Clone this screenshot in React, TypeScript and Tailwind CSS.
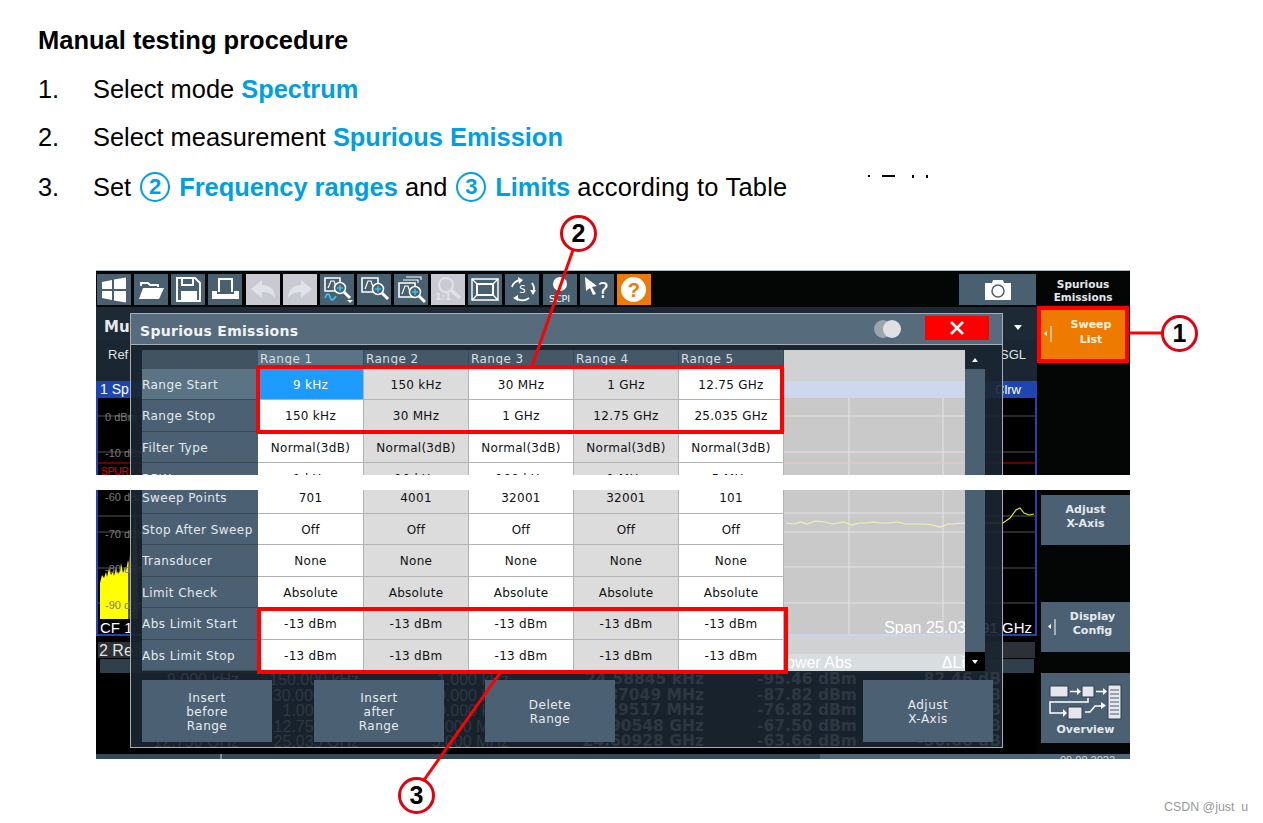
import React from 'react';

const ranges = ['Range 1', 'Range 2', 'Range 3', 'Range 4', 'Range 5'];

const upperRows = [
    { label: 'Range Start', values: ['9 kHz', '150 kHz', '30 MHz', '1 GHz', '12.75 GHz'] },
    { label: 'Range Stop', values: ['150 kHz', '30 MHz', '1 GHz', '12.75 GHz', '25.035 GHz'] },
    { label: 'Filter Type', values: ['Normal(3dB)', 'Normal(3dB)', 'Normal(3dB)', 'Normal(3dB)', 'Normal(3dB)'] },
    { label: 'RBW', values: ['1 kHz', '10 kHz', '100 kHz', '1 MHz', '5 MHz'] },
];

const lowerRows = [
    { label: 'Sweep Points', values: ['701', '4001', '32001', '32001', '101'] },
    { label: 'Stop After Sweep', values: ['Off', 'Off', 'Off', 'Off', 'Off'] },
    { label: 'Transducer', values: ['None', 'None', 'None', 'None', 'None'] },
    { label: 'Limit Check', values: ['Absolute', 'Absolute', 'Absolute', 'Absolute', 'Absolute'] },
    { label: 'Abs Limit Start', values: ['-13 dBm', '-13 dBm', '-13 dBm', '-13 dBm', '-13 dBm'] },
    { label: 'Abs Limit Stop', values: ['-13 dBm', '-13 dBm', '-13 dBm', '-13 dBm', '-13 dBm'] },
];

const results = [
    ['9.000 kHz', '150.000 kHz', '1.000 kHz', '24.58845 kHz', '-95.46 dBm', '82.46 dB'],
    ['150.000 kHz', '30.000 MHz', '10.000 kHz', '27.87049 MHz', '-87.82 dBm', '74.82 dB'],
    ['30.000 MHz', '1.000 GHz', '100.000 kHz', '816.69517 MHz', '-76.82 dBm', '63.82 dB'],
    ['1.000 GHz', '12.750 GHz', '1.000 MHz', '12.90548 GHz', '-67.50 dBm', '-54.50 dB'],
    ['12.750 GHz', '25.035 GHz', '5.000 MHz', '24.60928 GHz', '-63.66 dBm', '-50.66 dB'],
];

const Blue = ({ children }: { children: React.ReactNode }) => (
    <span className="font-bold text-[#009fe3]">{children}</span>
);

const CircledBlue = ({ n }: { n: string }) => (
    <span className="inline-flex w-[30px] h-[30px] items-center justify-center rounded-full border-[2.5px] border-[#009fe3] text-[#009fe3] font-bold text-[22px] mx-[9px]">
        {n}
    </span>
);

const Callout = ({ n, className }: { n: string; className: string }) => (
    <div className={`absolute w-[37px] h-[37px] rounded-full border-[3px] border-[#e3000f] bg-white flex items-center justify-center text-black font-bold text-[25px] font-['Liberation_Sans',sans-serif] ${className}`}>
        {n}
    </div>
);

const ToolButton = ({ children, tone = 'normal' }: { children?: React.ReactNode; tone?: 'normal' | 'off' | 'help' }) => (
    <div className={`w-[34px] h-[31px] shrink-0 ${tone === 'off' ? 'bg-[#c9cad1]' : tone === 'help' ? 'bg-[#ef7a00]' : 'bg-[#48606f]'}`}>
        <svg viewBox="0 0 34 31" className="w-full h-full" fill="none" stroke="#fff" strokeWidth="1.6">
            {children}
        </svg>
    </div>
);

const Magnifier = ({ x, y, plus = true }: { x: number; y: number; plus?: boolean }) => (
    <g>
        <circle cx={x} cy={y} r="5.5" fill="#48606f" stroke="#fff" strokeWidth="1.5" />
        <path d={`M${x + 4} ${y + 4}l6 6`} stroke="#fff" strokeWidth="3" />
        {plus && <path d={`M${x - 3} ${y}h6M${x} ${y - 3}v6`} stroke="#36c3f0" strokeWidth="1.5" />}
    </g>
);

const Toolbar = () => (
    <div className="h-[36px] pt-[3px] pl-[1px] pr-[1px] flex gap-[3.140px] bg-[#040606]">
        <ToolButton>
            <path d="M5 8l10-2v9H5zM17 5.600l12-2V15H17zM5 17h10v9L5 24zM17 17h12v11.400l-12-2z" fill="#fff" stroke="none" />
        </ToolButton>
        <ToolButton>
            <path d="M7 12V9h7l2 2h8v2" strokeWidth="1.8" />
            <path d="M5 25l4-11h21l-5 11z" fill="#fff" stroke="none" />
        </ToolButton>
        <ToolButton>
            <path d="M6 4h18l5 5v18H6z" strokeWidth="2" />
            <path d="M11 4v7h11V4" strokeWidth="2" />
            <path d="M10 17h16v10H10z" fill="#fff" stroke="none" />
        </ToolButton>
        <ToolButton>
            <path d="M11 18V5h13v13" strokeWidth="2" />
            <path d="M4 17h5v3h17v-3h5v8H4z" fill="#fff" stroke="none" />
        </ToolButton>
        <ToolButton tone="off">
            <path d="M5 15l11-9v5c8 0 13 5 13 13-3-4-7-6-13-6v6z" fill="#dfe3e8" stroke="none" />
        </ToolButton>
        <ToolButton tone="off">
            <path d="M29 15l-11-9v5C10 11 5 16 5 24c3-4 7-6 13-6v6z" fill="#dfe3e8" stroke="none" />
        </ToolButton>
        <ToolButton>
            <path d="M5 4h15v13H5z" />
            <path d="M8 14l3-7h3l2 6" strokeWidth="1.2" />
            <Magnifier x={20} y={14} />
            <path d="M5 24c2-5 4-5 5-1s3 4 6-1" stroke="#36c3f0" strokeWidth="1.6" />
            <path d="M27 26h6l-3 3z" fill="#fff" stroke="none" />
        </ToolButton>
        <ToolButton>
            <path d="M5 4h16v14H5z" />
            <path d="M8 15l3-8h3l2 6" strokeWidth="1.2" />
            <Magnifier x={21} y={15} />
        </ToolButton>
        <ToolButton>
            <path d="M12 3h15v3M9 6h15v3" strokeWidth="1.1" />
            <path d="M5 9h16v14H5z" />
            <path d="M8 20l3-8h3l2 6" strokeWidth="1.2" />
            <Magnifier x={21} y={18} />
        </ToolButton>
        <div className="relative w-[34px] h-[31px] shrink-0 bg-[#c9cad1] overflow-hidden">
            <svg viewBox="0 0 34 31" className="absolute inset-0 w-full h-full" fill="none" stroke="#dfe3e8">
                <circle cx="15" cy="11" r="7" strokeWidth="2" />
                <path d="M20 16l9 8" strokeWidth="3.500" />
            </svg>
            <span className="absolute left-[4px] bottom-[1px] text-[9px] font-bold text-[#e1e4e8] font-['DejaVu_Sans',sans-serif]">1:1</span>
        </div>
        <ToolButton>
            <path d="M4 5h26v21H4z" strokeWidth="1.4" />
            <path d="M9 10h16v11H9z" strokeWidth="2" />
            <path d="M4 5l5 5M30 5l-5 5M4 26l5-5M30 26l-5-5" strokeWidth="1.4" />
        </ToolButton>
        <div className="relative w-[34px] h-[31px] shrink-0 bg-[#48606f]">
            <svg viewBox="0 0 34 31" className="absolute inset-0 w-full h-full" fill="none" stroke="#fff" strokeWidth="1.8">
                <path d="M7 13c1-4 5-7 9-7M27 9c2 3 3 6 1 9M24 24c-4 3-9 3-13 0" />
                <path d="M13 3l5 3-4 4zM25 16l6 0-3 5zM13 21l0 6-5-3z" fill="#fff" stroke="none" />
            </svg>
            <span className="absolute inset-0 flex items-center justify-center text-[10px] text-white font-['DejaVu_Sans',sans-serif]">S</span>
        </div>
        <div className="relative w-[34px] h-[31px] shrink-0 bg-[#48606f]">
            <div className="absolute left-[10px] top-[3px] w-[14px] h-[14px] rounded-full bg-white" />
            <span className="absolute left-0 right-0 bottom-[2px] text-center text-[9.5px] leading-none text-white font-['DejaVu_Sans',sans-serif]">SCPI</span>
        </div>
        <div className="relative w-[34px] h-[31px] shrink-0 bg-[#48606f]">
            <svg viewBox="0 0 34 31" className="absolute inset-0 w-full h-full">
                <path d="M5 3l12 9-5 1 4 7-3 1-3-7-4 3z" fill="#fff" />
            </svg>
            <span className="absolute left-[18px] top-[7px] text-[21px] leading-none text-white font-['DejaVu_Sans',sans-serif]">?</span>
        </div>
        <div className="w-[34px] h-[31px] shrink-0 bg-[#ef7a00] flex items-center justify-center">
            <div className="w-[25px] h-[25px] rounded-full bg-white flex items-center justify-center text-[#ef7a00] font-bold text-[20px] font-['Liberation_Sans',sans-serif]">?</div>
        </div>
        <div className="ml-auto w-[77px] h-[31px] bg-[#48606f] flex items-center justify-center">
            <svg viewBox="0 0 28 22" className="w-[28px] h-[22px]">
                <path d="M1 4h7l1-3h10l1 3h7v17H1z" fill="#fff" />
                <circle cx="14" cy="12" r="6" fill="#fff" stroke="#48606f" strokeWidth="1.500" />
            </svg>
        </div>
    </div>
);

// the measurement window that sits behind the dialog
const InstrumentBackground = () => (
    <>
        <div className="h-[33px] bg-[#1d2a35] pt-[7px] pl-[8px] flex items-center text-[15px] font-bold text-[#e6e9ec] font-['DejaVu_Sans',sans-serif]">
            Mu
            <svg viewBox="0 0 8 5" className="ml-auto mr-[15px] w-[8px] h-[5px]"><path d="M0 0h8L4 5z" fill="#fff" /></svg>
        </div>
        <div className="h-[41px] bg-[#1a2631] flex justify-between pt-[5px] pl-[12px] pr-[11px] text-[13px] text-[#dfe3e6] font-['Liberation_Sans',sans-serif]">
            <span>Ref</span>
            <span>SGL</span>
        </div>
        <div className="h-[17px] bg-[#1f45b0] flex items-center justify-between pl-[4px] pr-[16px] text-[14px] text-white font-['Liberation_Sans',sans-serif]">
            <span>1 Sp</span>
            <span className="text-[13px]">Clrw</span>
        </div>
        <div className="relative h-[238px] shrink-0 bg-black border-x-2 border-b-2 border-[#1f45b0] overflow-hidden font-['Liberation_Sans',sans-serif]">
            <svg viewBox="0 0 937 236" className="absolute inset-0 w-[937px] h-[236px]" fill="none">
                <path d="M0 18h937M0 54h937M0 90h937M0 118h937M0 134h937M0 170h937M0 205h937" stroke="#555" />
                <path d="M0 65h937" stroke="#c00" />
                <path d="M2 222V185l2-8 2 3 2-6 1 5 2-9 2 7 2-4 1 5 2-8 2 6 2-3 1-8 2 10 2-6 1 4 2-11 2 9 1-3 2 5V222z" fill="#ffff00" />
                <path d="M30 222V170l2-14 2 10 3-60 3 70V222z" fill="#5a5a1e" />
                <path d="M880 125l25 0 7-5 6-8 4-2 4 5 5 2 5-1" stroke="#e6e600" strokeWidth="1.200" />
            </svg>
            <span className="absolute left-[7px] top-[11px] text-[11px] text-[#7c7c7c]">0 dBm</span>
            <span className="absolute left-[7px] top-[47px] text-[11px] text-[#7c7c7c]">-10 dBm</span>
            <span className="absolute left-[3px] top-[66px] text-[10px] text-[#e00000]">SPURIOUS</span>
            <span className="absolute left-[7px] top-[91px] text-[11px] text-[#7c7c7c]">-60 dBm</span>
            <span className="absolute left-[7px] top-[128px] text-[11px] text-[#7c7c7c]">-70 dBm</span>
            <span className="absolute left-[7px] top-[163px] text-[11px] text-[#7c7c7c]">-80 dBm</span>
            <span className="absolute left-[7px] top-[199px] text-[11px] text-[#7c7c7c]">-90 dBm</span>
            <span className="absolute left-0 bottom-0 w-full h-[15px] bg-black" />
            <span className="absolute left-[2px] -bottom-[1px] text-[15px] leading-[15px] text-white">CF 1</span>
            <span className="absolute right-[3px] -bottom-[1px] text-[15px] leading-[15px] text-white">91 GHz</span>
        </div>
        <div className="mt-[6px] ml-[2px] mr-[2px] h-[16px] shrink-0 bg-[#2b3136] pl-[1px] pt-[1px] text-[16px] leading-[16px] text-[#e2e2e2] font-['Liberation_Sans',sans-serif]">
            2 Re
        </div>
        <div className="mt-[1px] ml-[4px] mr-[3px] h-[14px] shrink-0 bg-[#2f3f4c]" />
        <div className="-mt-[1px] h-[76px] shrink-0 overflow-hidden grid grid-cols-[143px_120px_150px_195px_153px_144px] content-start text-right text-[#cfd4d8]">
            {results.map((row) =>
                row.map((v, i) => (
                    <span
                        key={row[0] + i}
                        className={`h-[15.500px] leading-[15.500px] whitespace-nowrap ${i > 2 ? "font-bold text-[15.500px] font-['DejaVu_Sans',sans-serif]" : "text-[16px] font-['Liberation_Sans',sans-serif]"}`}
                    >
                        {v}
                    </span>
                ))
            )}
        </div>
    </>
);

const TableRow = ({ label, values, active }: { label: string; values: string[]; active?: boolean }) => (
    <div className="grid grid-cols-[116px_106px_105px_105px_105px_105px] h-[31.500px] shrink-0">
        <div className={`flex items-center pt-[2px] border-b border-[#394a58] text-[12px] tracking-[0.45px] text-[#e4e9ed] ${active ? 'bg-[#5a7385]' : 'bg-[#4b6073]'}`}>
            {label}
        </div>
        {values.map((v, i) => {
            const selected = active && i === 0;
            return (
                <div
                    key={i}
                    className={`flex items-center justify-center pt-[2px] border-b border-r border-[#b3b3b3] text-[12px] tracking-[0.28px] ${selected ? 'bg-[#1e9bff] text-white' : i % 2 === 1 ? 'bg-[#dcdcdc] text-[#111]' : 'bg-white text-[#111]'}`}
                >
                    {v}
                </div>
            );
        })}
    </div>
);

const DialogButton = ({ lines, className = '' }: { lines: string[]; className?: string }) => (
    <div className={`h-[62px] w-[130px] bg-[#4b6073] flex flex-col items-center justify-center pt-[2px] text-[12px] tracking-[0.5px] leading-[14px] text-[#e8ecef] ${className}`}>
        {lines.map((l) => (
            <span key={l}>{l}</span>
        ))}
    </div>
);

const Dialog = () => (
    <div className="absolute left-[34px] top-[42px] w-[873px] h-[435px] border border-[#a6aeb4] bg-[#1a2631]/90 font-['DejaVu_Sans',sans-serif]">
        <div className="h-[31px] bg-[#566b7b] border-b border-[#a6aeb4] flex items-center pl-[9px] pr-[13px] text-[14px] font-bold tracking-[0.3px] text-[#f1f3f5]">
            <span className="pt-[5px]">Spurious Emissions</span>
            <div className="ml-auto flex mr-[24px]">
                <div className="w-[18px] h-[18px] rounded-full bg-[#9aa6ae]" />
                <div className="w-[18px] h-[18px] rounded-full bg-[#dde1e4] -ml-[9px]" />
            </div>
            <div className="w-[64px] h-[24px] -mt-[2px] bg-[#ff0000] flex items-center justify-center">
                <svg viewBox="0 0 14 14" className="w-[14px] h-[14px]"><path d="M1 1l12 12M13 1L1 13" stroke="#fff" strokeWidth="2.600" /></svg>
            </div>
        </div>
        <div className="mt-[5px] ml-[11px] flex h-[321px]">
            <div className="w-[642px]">
                <div className="h-[125px] overflow-hidden">
                    <div className="grid grid-cols-[116px_106px_105px_105px_105px_105px] h-[18.500px]">
                        <div className="bg-[#415361]" />
                        {ranges.map((r, i) => (
                            <div key={r} className={`pl-[2px] text-[12px] tracking-[0.45px] leading-[19px] text-[#d8dfe4] border-r border-[#394a58] ${i === 0 ? 'bg-[#5a7385]' : 'bg-[#455868]'}`}>
                                {r}
                            </div>
                        ))}
                    </div>
                    {upperRows.map((r, i) => (
                        <TableRow key={r.label} label={r.label} values={r.values} active={i === 0} />
                    ))}
                </div>
                <div className="h-[181px] mt-[15px] overflow-hidden flex flex-col justify-end">
                    {lowerRows.map((r) => (
                        <TableRow key={r.label} label={r.label} values={r.values} />
                    ))}
                </div>
            </div>
            {/* chart seen through the dialog */}
            <div className="relative w-[181px] flex flex-col bg-[#c9c9c9] overflow-hidden">
                <div className="h-[31px] bg-[#d0d1d3]" />
                <div className="h-[17px] bg-[#cdd8ec]" />
                <div className="relative flex-1">
                    <svg viewBox="0 0 181 238" className="absolute left-0 top-0 w-[181px] h-[238px]" fill="none">
                        <path d="M0 18h181M0 54h181M0 115h181M0 134h181M0 169h181M0 205h181M65 0v236M159 0v236" stroke="#e4e4e4" />
                        <path d="M0 65h181" stroke="#f0c8c8" />
                        <path d="M2 125l8 1 7-2 6 2 8-3 10 1 7 2 6-1 6-1 8 3 7-2 8 0 7-1 8 1 8 0 8-1 7 2 12 0 8 0 8 1 7 2 8-3 7 0 7-1 8 1" stroke="#f2f2b0" strokeWidth="1.200" />
                    </svg>
                    <span className="absolute right-[-1px] top-[222px] text-[16px] leading-none whitespace-nowrap text-white font-['Liberation_Sans',sans-serif]">Span 25.03</span>
                    <div className="absolute inset-x-0 bottom-0 h-[2px] bg-[#c8d4e8]" />
                </div>
                <div className="h-[35px] shrink-0 flex flex-col">
                    <div className="h-[18px] bg-[#d0d1d3]" />
                    <div className="h-[17px] bg-[#d8dde0] flex justify-between pl-[2px] text-[16px] leading-[18px] text-white font-['Liberation_Sans',sans-serif]">
                        <span>ower Abs</span>
                        <span>ΔLi</span>
                    </div>
                </div>
            </div>
            <div className="w-[20px] flex flex-col">
                <div className="h-[19px] flex items-center justify-center">
                    <svg viewBox="0 0 6 4" className="w-[6px] h-[4px]"><path d="M3 0l3 4H0z" fill="#fff" /></svg>
                </div>
                <div className="flex-1 bg-[#4b6073]" />
                <div className="h-[19px] bg-black flex items-center justify-center">
                    <svg viewBox="0 0 6 4" className="w-[6px] h-[4px]"><path d="M0 0h6L3 4z" fill="#fff" /></svg>
                </div>
            </div>
        </div>
        <div className="mt-[9px] ml-[11px] flex">
            <DialogButton lines={['Insert', 'before', 'Range']} />
            <DialogButton lines={['Insert', 'after', 'Range']} className="ml-[42px]" />
            <DialogButton lines={['Delete', 'Range']} className="ml-[41px]" />
            <DialogButton lines={['Adjust', 'X-Axis']} className="ml-[248px]" />
        </div>
    </div>
);

const SoftKey = ({ lines, arrow, className = '' }: { lines: string[]; arrow?: boolean; className?: string }) => (
    <div className={`relative ml-[4px] w-[89px] h-[50px] bg-[#4b6073] flex flex-col items-center justify-center pb-[6px] text-[11px] font-bold leading-[14px] text-[#e4e9ed] ${arrow ? 'pl-[14px]' : ''} ${className}`}>
        {arrow && (
            <svg viewBox="0 0 8 16" className="absolute left-[7px] top-[17px] w-[8px] h-[16px]">
                <path d="M3 5v5L0 7.500z" fill="#fff" />
                <path d="M7 0v16" stroke="#fff" />
            </svg>
        )}
        {lines.map((l) => (
            <span key={l}>{l}</span>
        ))}
    </div>
);

const SoftKeys = () => (
    <div className="w-[92px] flex flex-col bg-[#040606] font-['DejaVu_Sans',sans-serif]">
        <div className="h-[35px] pt-[4px] flex flex-col items-center justify-center text-[10.500px] font-bold leading-[13px] text-[#e4e9ed]">
            <span>Spurious</span>
            <span>Emissions</span>
        </div>
        <div className="relative h-[57px] border-[4px] border-[#ff0000] bg-[#ef7a00] flex flex-col items-center justify-center pl-[16px] pb-[6px] text-[11px] font-bold leading-[15px] text-[#fff3e0]">
            <svg viewBox="0 0 8 16" className="absolute left-[3px] top-[16px] w-[8px] h-[16px]">
                <path d="M3 5v5L0 7.500z" fill="#fff" />
                <path d="M7 0v16" stroke="#fff" />
            </svg>
            <span>Sweep</span>
            <span>List</span>
        </div>
        <SoftKey lines={['Adjust', 'X-Axis']} className="mt-[132px]" />
        <SoftKey lines={['Display', 'Config']} arrow className="mt-[57px]" />
        <div className="ml-[4px] mt-[21px] w-[89px] h-[70px] bg-[#4b6073] flex flex-col items-center pt-[11px]">
            <svg viewBox="0 0 74 37" className="w-[74px] h-[37px]" fill="none">
                <path d="M1 2h18v11H1zM33 2h12v11H33zM59 1h13v34H59zM19 23h14v12H19z" fill="#e6e6ee" stroke="#2e3f4d" />
                <path d="M61 6h9M61 10h9M61 14h9M61 18h9M61 22h9M61 26h9M61 30h9" stroke="#4b6073" />
                <path d="M21 7.500h9M47 7.500h9M39 14v4H1v11h15M36 28h5l5-6h8" stroke="#fff" strokeWidth="1.500" />
                <path d="M28 4l4 3.500-4 3.500zM54 4l4 3.500-4 3.500zM14 25l4 4-4 4zM52 18l5 3.500-5 3.500z" fill="#fff" />
            </svg>
            <span className="mt-[1px] text-[11px] font-bold text-[#e4e9ed]">Overview</span>
        </div>
    </div>
);

export default function App() {
    return (
        <div className="relative w-[1263px] h-[823px] bg-white overflow-hidden text-black font-['Liberation_Sans',sans-serif]">
            <div className="h-[270px] pt-[26px] pl-[38px] flex flex-col gap-[20.500px] text-[25.400px] leading-[28px]">
                <h1 className="font-bold text-[25.500px] leading-[28px]">Manual testing procedure</h1>
                <div className="flex">
                    <span className="w-[55px]">1.</span>
                    <span>Select mode <Blue>Spectrum</Blue></span>
                </div>
                <div className="flex">
                    <span className="w-[55px]">2.</span>
                    <span>Select measurement <Blue>Spurious Emission</Blue></span>
                </div>
                <div className="flex items-center">
                    <span className="w-[55px]">3.</span>
                    <span className="flex items-center whitespace-pre">
                        Set
                        <CircledBlue n="2" />
                        <Blue>Frequency ranges</Blue> and
                        <CircledBlue n="3" />
                        <Blue>Limits</Blue>
                        <span className="tracking-[0.25px]"> according to Table</span>
                    </span>
                    <span className="flex items-start ml-[81px] -mt-[21px]">
                        <i className="w-[2px] h-[2px] bg-black" />
                        <i className="ml-[12px] w-[13px] h-[2px] bg-black" />
                        <i className="ml-[17px] w-[2px] h-[3px] bg-black" />
                        <i className="ml-[12px] w-[2px] h-[3px] bg-black" />
                    </span>
                </div>
            </div>

            <div className="relative ml-[96px] w-[1034px] h-[489px] flex flex-col bg-black border-t border-[#aeb2bc]">
                <div className="flex flex-1 min-h-0">
                    <div className="w-[941px] flex flex-col overflow-hidden">
                        <Toolbar />
                        <InstrumentBackground />
                    </div>
                    <SoftKeys />
                </div>
                <div className="h-[5px] shrink-0 flex overflow-hidden">
                    <div className="w-[124px] bg-[#34495a]" />
                    <div className="w-[2px] bg-[#7d8f9c]" />
                    <div className="w-[598px] bg-[#34495a]" />
                    <div className="flex-1 bg-[#4f6678] pl-[240px] text-[11px] leading-[13px] text-[#cfd6db]">09.08.2022</div>
                </div>
                <Dialog />
                {/* the page cuts the screenshot into two pieces */}
                <div className="absolute inset-x-0 top-[204px] h-[15px] bg-white" />
                {/* red frames */}
                <div className="absolute left-[160px] top-[94px] w-[528px] h-[69px] border-[4px] border-[#ff0000]" />
                <div className="absolute left-[161px] top-[336px] w-[531px] h-[67px] border-[4px] border-[#ff0000]" />
            </div>

            <svg className="absolute inset-0 w-[1263px] h-[823px] pointer-events-none" viewBox="0 0 1263 823" fill="none">
                <path d="M573 250L532 366M500 673L424 780" stroke="#ff0000" strokeWidth="3" />
                <path d="M1130 333h32" stroke="#ff0000" strokeWidth="3" />
            </svg>
            <Callout n="1" className="left-[1161px] top-[315px]" />
            <Callout n="2" className="left-[560px] top-[215px]" />
            <Callout n="3" className="left-[398px] top-[777px]" />

            <div className="absolute left-[1164px] top-[800px] text-[12.400px] leading-[14px] text-[#999] whitespace-pre font-['Liberation_Sans',sans-serif]">CSDN @just  u</div>
        </div>
    );
}
